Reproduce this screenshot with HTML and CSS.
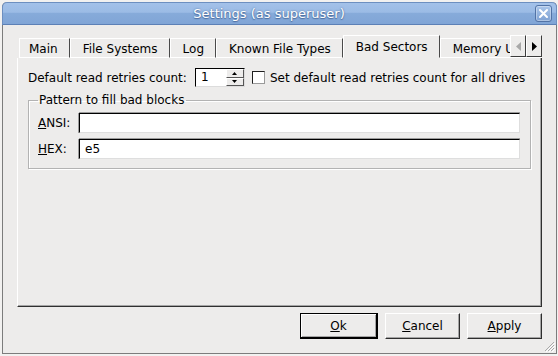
FILE: index.html
```html
<!DOCTYPE html>
<html lang="en">
<head>
    <meta charset="UTF-8">
    <title>Settings (as superuser)</title>
    <link rel="stylesheet" href="styles.css">
</head>
<body>
    <div class="window">
        <div class="titlebar">
            <span class="title">Settings (as superuser)</span>
            <span class="close">
                <svg width="11" height="11" viewBox="0 0 11 11"><path d="M2 2L9 9M9 2L2 9" stroke="#fff" stroke-width="2" stroke-linecap="round"/></svg>
            </span>
        </div>
        <div class="content">
            <div class="tabbar">
                <div class="tabs">
                    <div class="tab">Main</div>
                    <div class="tab">File Systems</div>
                    <div class="tab">Log</div>
                    <div class="tab">Known File Types</div>
                    <div class="tab active">Bad Sectors</div>
                    <div class="tab">Memory Usage</div>
                </div>
                <div class="scroller">
                    <span class="arrow"><svg width="5" height="9" viewBox="0 0 5 9"><path d="M5 0L0 4.5L5 9Z" fill="#a8a8a8"/></svg></span>
                    <span class="arrow"><svg width="5" height="9" viewBox="0 0 5 9"><path d="M0 0L5 4.5L0 9Z" fill="#000"/></svg></span>
                </div>
            </div>
            <div class="pane">
                <div class="retries-row">
                    <span class="retries-label">Default read retries count:</span>
                    <div class="spin">
                        <span class="spin-value">1</span>
                        <div class="spin-buttons">
                            <span class="spin-btn"><svg width="5" height="3" viewBox="0 0 5 3"><path d="M2.5 0L5 3H0Z" fill="#000"/></svg></span>
                            <span class="spin-btn"><svg width="5" height="3" viewBox="0 0 5 3"><path d="M0 0H5L2.5 3Z" fill="#000"/></svg></span>
                        </div>
                    </div>
                    <span class="checkbox"></span>
                    <span>Set default read retries count for all drives</span>
                </div>
                <fieldset class="group">
                    <legend>Pattern to fill bad blocks</legend>
                    <div class="field">
                        <span class="field-label"><u>A</u>NSI:</span>
                        <div class="input"></div>
                    </div>
                    <div class="field">
                        <span class="field-label"><u>H</u>EX:</span>
                        <div class="input">e5</div>
                    </div>
                </fieldset>
            </div>
            <div class="buttons">
                <button class="btn default"><u>O</u>k</button>
                <button class="btn"><u>C</u>ancel</button>
                <button class="btn"><u>A</u>pply</button>
            </div>
        </div>
        <svg class="grip" width="11" height="11" viewBox="0 0 11 11">
            <path d="M10 1L1 10M10 4L4 10M10 7L7 10" stroke="#a9a9a9" stroke-width="1"/>
            <path d="M11 2L2 11M11 5L5 11M11 8L8 11" stroke="#fff" stroke-width="1"/>
        </svg>
    </div>
</body>
</html>
```

FILE: styles.css
```css
html, body {
    margin: 0;
    padding: 0;
    background: #f2f1f0;
}

body {
    font-family: 'DejaVu Sans', sans-serif;
    font-size: 12px;
    color: #000;
    width: 558px;
    height: 356px;
    overflow: hidden;
}

.window {
    position: relative;
    margin: 2px 1px 0 2px;
    height: 352px;
    box-sizing: border-box;
    background: #edeceb;
    border: 1px solid #7c7c7c;
    border-top: none;
    border-radius: 5px 5px 0 0;
    display: flex;
    flex-direction: column;
}

/* title bar */
.titlebar {
    height: 23px;
    box-sizing: border-box;
    margin: 0 -1px;
    border: 1px solid #6d8fc0;
    border-bottom-color: #5c80b6;
    border-radius: 5px 5px 0 0;
    background: linear-gradient(#a3c1e9 0%, #9bbbe5 45%, #87abda 46%, #80a5d6 100%);
    display: flex;
    align-items: center;
    padding-right: 4px;
}

.title {
    flex: 1;
    text-align: center;
    color: #fff;
    font-size: 13px;
    text-shadow: 0 0 2px #4d6e9f, 0 1px 1px #4d6e9f;
}

.close {
    width: 17px;
    height: 17px;
    box-sizing: border-box;
    border: 1px solid #5273a6;
    border-radius: 3px;
    background: linear-gradient(#a9c5ea, #7fa2d3);
    box-shadow: inset 0 0 0 1px rgba(255, 255, 255, 0.35);
    display: flex;
    align-items: center;
    justify-content: center;
}

.content {
    flex: 1;
    display: flex;
    flex-direction: column;
    padding: 10px 14px 14px 14px;
}

/* tabs */
.tabbar {
    height: 23px;
    display: flex;
    align-items: flex-end;
}

.tabs {
    flex: 1;
    min-width: 0;
    overflow: hidden;
    display: flex;
    align-items: flex-end;
    padding-left: 2px;
    height: 23px;
}

.tab {
    flex-shrink: 0;
    height: 20px;
    box-sizing: border-box;
    padding: 2px 11px 0 12px;
    line-height: 16px;
    border-top: 1px solid #fff;
    border-left: 1px solid #fff;
    border-right: 1px solid #4a4a4a;
    border-bottom: 1px solid #fff;
    white-space: nowrap;
}

.tab:first-child {
    padding-left: 9px;
}

.tab.active {
    height: 23px;
    padding-top: 3px;
    border-bottom-color: #edeceb;
}

.scroller {
    display: flex;
    height: 22px;
    border-bottom: 1px solid #fff;
}

.arrow {
    width: 16px;
    box-sizing: border-box;
    border-right: 1px solid #3c3c3c;
    border-bottom: 1px solid #3c3c3c;
    border-top: 1px solid #fff;
    border-left: 1px solid #fff;
    display: flex;
    align-items: center;
    justify-content: center;
}

/* pane */
.pane {
    flex: 1;
    border-left: 1px solid #fff;
    border-right: 1px solid #303030;
    border-bottom: 1px solid #303030;
    box-shadow: inset -1px -1px 0 #a5a5a5;
    padding: 10px 10px 0 10px;
}

.retries-row {
    display: flex;
    align-items: center;
    height: 19px;
}

.spin {
    margin-left: 8px;
    width: 50px;
    height: 19px;
    box-sizing: border-box;
    background: #fff;
    border-top: 1px solid #000;
    border-left: 1px solid #000;
    border-right: 1px solid #dcdcdc;
    border-bottom: 1px solid #dcdcdc;
    display: flex;
}

.spin-value {
    flex: 1;
    padding-left: 5px;
    line-height: 17px;
}

.spin-buttons {
    width: 18px;
    display: flex;
    flex-direction: column;
    background: #edeceb;
}

.spin-btn {
    flex: 1;
    display: flex;
    align-items: center;
    justify-content: center;
    border-top: 1px solid #fff;
    border-left: 1px solid #fff;
    border-right: 1px solid #555;
    border-bottom: 1px solid #555;
}

.checkbox {
    width: 13px;
    height: 13px;
    box-sizing: border-box;
    margin: 0 5px 0 7px;
    background: #fff;
    border-top: 1px solid #1e1e1e;
    border-left: 1px solid #1e1e1e;
    border-right: 1px solid #9a9a9a;
    border-bottom: 1px solid #9a9a9a;
}

/* group box */
.group {
    margin: 6px 0 0 0;
    padding: 4px 10px 9px 9px;
    border: 1px solid #b3b3b3;
    box-shadow: inset 1px 1px 0 #fff, 1px 1px 0 #fff;
}

.group legend {
    padding: 0 2px 0 1px;
}

.field {
    display: flex;
    align-items: center;
    margin-top: 6px;
}

.field:first-of-type {
    margin-top: 2px;
}

.field-label {
    width: 41px;
}

.input {
    flex: 1;
    height: 20px;
    box-sizing: border-box;
    background: #fff;
    border-top: 1px solid #000;
    border-left: 1px solid #000;
    border-right: 1px solid #dedede;
    border-bottom: 1px solid #dedede;
    box-shadow: 0 -1px 0 #9c9c9c, -1px 0 0 #9c9c9c;
    padding-left: 5px;
    line-height: 18px;
}

/* bottom buttons */
.buttons {
    display: flex;
    justify-content: flex-end;
    gap: 7px;
    margin-top: 6px;
}

.btn {
    font-family: 'DejaVu Sans', sans-serif;
    font-size: 12px;
    color: #000;
    width: 75px;
    height: 26px;
    background: #edeceb;
    border-top: 1px solid #fff;
    border-left: 1px solid #fff;
    border-right: 1px solid #2e2e2e;
    border-bottom: 1px solid #2e2e2e;
    box-shadow: inset -1px -1px 0 #a5a5a5;
    padding: 0;
}

.btn.default {
    width: 78px;
    border: 1px solid #000;
    border-right-width: 2px;
    border-bottom-width: 2px;
    box-shadow: inset 1px 1px 0 #fff, inset -1px -1px 0 #a5a5a5;
}

.grip {
    position: absolute;
    right: 1px;
    bottom: 1px;
}
```
